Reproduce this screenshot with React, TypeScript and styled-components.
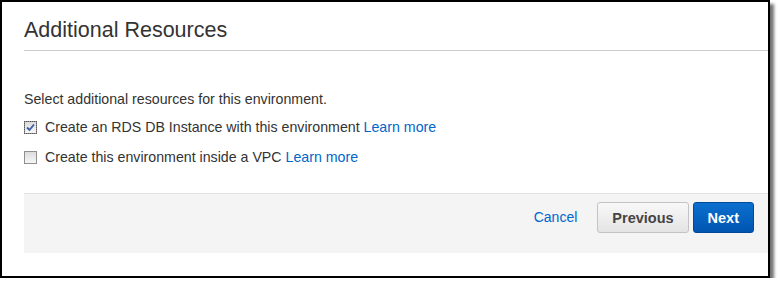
import { FC } from "react";
import styled, { createGlobalStyle } from "styled-components";

const GlobalStyle = createGlobalStyle`
  html, body {
    margin: 0;
    padding: 0;
    background: #fff;
    font-family: "Liberation Sans", Arial, sans-serif;
  }
`;

const resources = [
  { label: "Create an RDS DB Instance with this environment", checked: true },
  { label: "Create this environment inside a VPC", checked: false },
];

export default function App() {
  return (
    <>
      <GlobalStyle />
      <Frame>
        <Section>
          <Title>Additional Resources</Title>
          <Body>
            <Intro>Select additional resources for this environment.</Intro>
            {resources.map((r) => (
              <Option key={r.label}>
                <Checkbox checked={r.checked} />
                <span>
                  {r.label} <LearnMore href="#">Learn more</LearnMore>
                </span>
              </Option>
            ))}
          </Body>
          <Footer>
            <CancelLink href="#">Cancel</CancelLink>
            <Button>Previous</Button>
            <Button primary>Next</Button>
          </Footer>
        </Section>
      </Frame>
    </>
  );
}

const Checkbox: FC<{ checked?: boolean }> = ({ checked }) => (
  <Box focused={checked}>
    {checked && (
      <svg width="9" height="9" viewBox="0 0 9 9">
        <path d="M1 4.5 L3.5 7 L8 1.5" fill="none" stroke="#3b5aa6" strokeWidth="1.8" />
      </svg>
    )}
  </Box>
);

const Frame = styled.div`
  width: 766px;
  height: 274px;
  border: 2px solid #000;
  box-shadow: 4px 4px 3px rgba(0, 0, 0, 0.55);
  background: #fff;
  overflow: hidden;
`;

const Section = styled.div`
  margin-left: 22px;
  display: flex;
  flex-direction: column;
`;

const Title = styled.h2`
  margin: 0;
  padding: 16px 0 8px;
  font-size: 21.5px;
  font-weight: normal;
  color: #333;
  border-bottom: 1px solid #ccc;
  line-height: 24px;
`;

const Body = styled.div`
  display: flex;
  flex-direction: column;
  padding: 40px 0 28px;
  gap: 14px;
  font-size: 14.2px;
  color: #333;
`;

const Intro = styled.div`
  line-height: 16px;
  margin-bottom: -2px;
`;

const Option = styled.label`
  display: flex;
  align-items: center;
  gap: 8px;
  line-height: 16px;
`;

const Box = styled.span<{ focused?: boolean }>`
  width: 11px;
  height: 11px;
  border: 1px solid #8f8f8f;
  background: linear-gradient(#dcdcdc, #f6f6f6);
  display: flex;
  align-items: center;
  justify-content: center;
  outline: ${({ focused }) => (focused ? "1px dotted #555" : "none")};
  outline-offset: -1px;
`;

const LearnMore = styled.a`
  color: #0066cc;
  text-decoration: none;
`;

const Footer = styled.div`
  height: 51px;
  border-top: 1px solid #e3e3e3;
  background: #f4f4f4;
  display: flex;
  align-items: flex-start;
  justify-content: flex-end;
  gap: 4px;
  padding: 8px 14px 0 0;
`;

const CancelLink = styled.a`
  color: #0066cc;
  font-size: 14px;
  line-height: 31px;
  text-decoration: none;
  margin-right: 16px;
`;

const Button = styled.button<{ primary?: boolean }>`
  height: 31px;
  padding: 0 14px;
  border-radius: 3px;
  font-family: "Liberation Sans", Arial, sans-serif;
  font-size: 14.5px;
  font-weight: bold;
  cursor: pointer;
  border: 1px solid ${({ primary }) => (primary ? "#004a99" : "#c3c3c3")};
  color: ${({ primary }) => (primary ? "#fff" : "#444")};
  background: ${({ primary }) =>
    primary
      ? "linear-gradient(#0b6fcf, #0055b0)"
      : "linear-gradient(#f8f8f8, #e4e4e4)"};
`;
